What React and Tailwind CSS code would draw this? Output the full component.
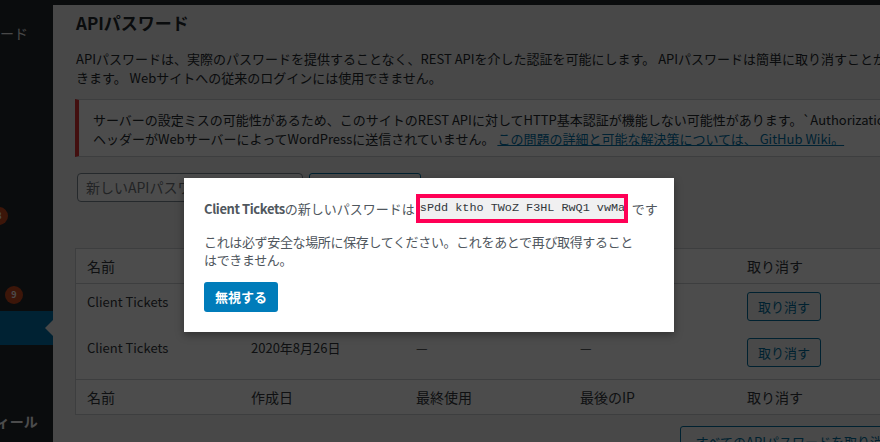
const cols = ['w-[164px]', 'w-[165px]', 'w-[164px]', 'w-[167px]', 'flex-1'];

function RevokeButton({ children = '取り消す', className = '' }) {
  return (
    <button className={`h-[29px] px-[10px] rounded-[3px] border border-[#0071a1] bg-[#f3f5f6] text-[#0071a1] text-[13px] leading-none whitespace-nowrap ${className}`}>
      {children}
    </button>
  );
}

function HeadRow({ top }) {
  const labels = ['名前', '作成日', '最終使用', '最後のIP', '取り消す'];
  return (
    <div className={`flex h-[35px] items-center text-[14px] text-[#32373c] ${top ? 'border-b' : 'border-t'} border-[#ccd0d4]`}>
      {labels.map((l, i) => (
        <div key={l} className={`${cols[i]} pl-[11px] shrink-0`}>{l}</div>
      ))}
    </div>
  );
}

function Row({ h }) {
  const cells = ['Client Tickets', '2020年8月26日', '—', '—'];
  return (
    <div className={`flex ${h} pt-[8px] text-[13px] text-[#32373c]`}>
      {cells.map((c, i) => (
        <div key={i} className={`${cols[i]} pl-[11px] shrink-0 leading-[20px]`}>{c}</div>
      ))}
      <div className={`${cols[4]} pl-[11px]`}>
        <RevokeButton />
      </div>
    </div>
  );
}

function Sidebar() {
  return (
    <div className="w-[53px] shrink-0 bg-[#23282d] text-[#f0f0f1] text-[14px] overflow-hidden flex flex-col pt-[18px]">
      <div className="h-[20px] leading-[20px] whitespace-nowrap -ml-[70px]">ダッシュボード</div>
      <div className="mt-[164px] h-[18px] -ml-[10px]">
        <span className="w-[18px] h-[18px] rounded-full bg-[#ca4a1f] text-white text-[9px] font-semibold flex items-center justify-center">8</span>
      </div>
      <div className="mt-[61px] h-[18px] ml-[5px]">
        <span className="w-[18px] h-[18px] rounded-full bg-[#ca4a1f] text-white text-[9px] font-semibold flex items-center justify-center">9</span>
      </div>
      <div className="relative mt-[7px] h-[34px] bg-[#0073aa]">
        {/* current item notch */}
        <span className="absolute right-0 top-1/2 -translate-y-1/2 w-0 h-0 border-y-[8px] border-y-transparent border-r-[8px] border-r-[#f1f1f1]" />
      </div>
      <div className="mt-[66px] h-[20px] leading-[20px] whitespace-nowrap -ml-[46px] font-semibold text-white">プロフィール</div>
    </div>
  );
}

function Main() {
  return (
    <div className="flex-1 pl-[22px] pt-[6px] overflow-hidden">
      <div className="w-[836px] text-[#23282d]">
        <h2 className="ml-[1px] text-[17px] leading-[23px] font-semibold">APIパスワード</h2>
        <p className="ml-[1px] mt-[15px] text-[13px] leading-[19px] whitespace-nowrap">
          APIパスワードは、実際のパスワードを提供することなく、REST APIを介した認証を可能にします。 APIパスワードは簡単に取り消すことがで
          <br />
          きます。 Webサイトへの従来のログインには使用できません。
        </p>

        {/* error notice */}
        <div className="mt-[12px] bg-white border border-[#ccd0d4] border-l-4 border-l-[#dc3232] pl-[14px] pt-[10px] pb-[8px] text-[13px] leading-[19px] whitespace-nowrap">
          サーバーの設定ミスの可能性があるため、このサイトのREST APIに対してHTTP基本認証が機能しない可能性があります。`Authorization`
          <br />
          ヘッダーがWebサーバーによってWordPressに送信されていません。{' '}
          <a className="text-[#0073aa] underline">この問題の詳細と可能な解決策については、 GitHub Wiki。</a>
        </div>

        <div className="mt-[16px] flex gap-[6px] ml-[2px]">
          <div className="w-[226px] h-[29px] rounded-[4px] border border-[#7e8993] bg-white pl-[8px] flex items-center text-[14px] text-[#72777c] whitespace-nowrap overflow-hidden">
            新しいAPIパスワード名
          </div>
          <RevokeButton className="w-[112px] px-0">新しいAPIパスワードを追加</RevokeButton>
        </div>

        {/* passwords table */}
        <div className="mt-[46px] border border-[#ccd0d4] bg-white">
          <HeadRow top />
          <Row h="h-[46px]" />
          <Row h="h-[49px]" />
          <HeadRow />
        </div>

        <div className="mt-[11px] flex justify-end">
          <RevokeButton className="h-[30px] px-[14px]">すべてのAPIパスワードを取り消す</RevokeButton>
        </div>
      </div>
    </div>
  );
}

export default function App() {
  return (
    <div className="relative w-[880px] h-[442px] overflow-hidden bg-[#f1f1f1] font-['Noto_Sans_CJK_JP',sans-serif]">
      <div className="h-[5px] bg-[#23282d]" />
      <div className="flex h-[437px]">
        <Sidebar />
        <Main />
      </div>

      {/* backdrop */}
      <div className="absolute inset-0 bg-black/70" />

      {/* new password dialog */}
      <div className="absolute left-[184px] top-[178px] w-[490px] bg-white shadow-[0_3px_8px_rgba(0,0,0,0.35)] px-[20px] pt-[16px] pb-[20px] text-[13px] text-[#50575e]">
        <div className="flex items-center h-[29px] whitespace-nowrap">
          <span className="font-semibold tracking-[-0.4px]">Client Tickets</span>
          <span>の新しいパスワードは</span>
          <span className="ml-[1px] border-4 border-[#ff0056]">
            <code className="block w-[204px] h-[21px] bg-[#f0f0f1] text-[#32373c] font-['Liberation_Mono',monospace] text-[11.8px] leading-[21px] overflow-hidden">
              sPdd ktho TWoZ F3HL RwQ1 vwMa
            </code>
          </span>
          <span className="ml-[4px]">です</span>
        </div>
        <p className="mt-[10px] leading-[18px] whitespace-nowrap tracking-[-0.35px]">
          これは必ず安全な場所に保存してください。これをあとで再び取得すること
          <br />
          はできません。
        </p>
        <button className="mt-[13px] w-[74px] h-[30px] rounded-[3px] bg-[#007cba] text-white text-[13px] font-semibold">
          無視する
        </button>
      </div>
    </div>
  );
}
